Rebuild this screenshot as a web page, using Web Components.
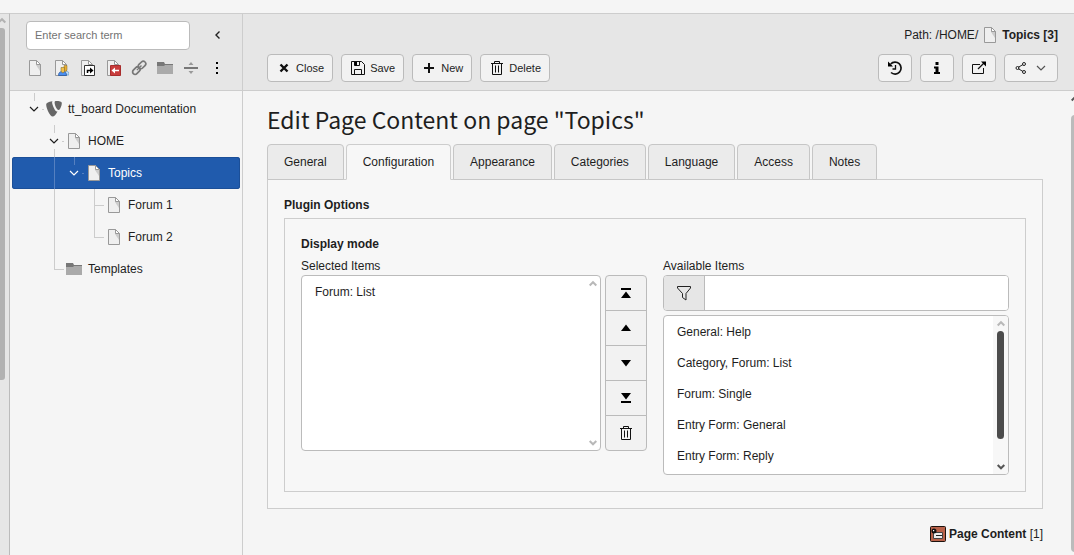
<!DOCTYPE html>
<html lang="en">
<head>
<meta charset="utf-8">
<title>Edit Page Content on page "Topics"</title>
<style>
  html, body { margin: 0; height: 100%; }
  body {
    font: 12px/16px "Liberation Sans", Arial, sans-serif;
    color: #1e1e1e;
    background: #f5f5f5;
    --line: #cdcdcd;
    --edge: #bbb;
    --bar: #e6e6e6;
  }
</style>
</head>
<body>
<app-shell>
  <module-scroll slot="modules"></module-scroll>
  <page-tree slot="tree"></page-tree>
  <doc-header slot="main"></doc-header>
  <edit-form slot="main"></edit-form>
</app-shell>

<script>
const ICONS = {
  page: '<path d="M2.5.5h7l4 4v11h-11z" fill="#efefef"/><path d="M9 1v4l4 6V5z" fill="#ccc"/><path d="M2.5.5h7l4 4v11h-11z" fill="none" stroke="#999"/><path d="M9.5.5v4h4z" fill="#fff" stroke="#999"/>',
  pageUsers: '<path d="M2.5.5h7l4 4v11h-11z" fill="#efefef" stroke="#999"/><path d="M9.5.5v4h4z" fill="#fff" stroke="#999"/><path d="M10 15c0-3 1-4 3-4s3 1 3 4z" fill="#b9d8f5" stroke="#5c94c4" stroke-width=".6"/><path d="M11 5.500h3v4l-1 2-2-1z" fill="#e8ae35" stroke="#8a6a1d" stroke-width=".5"/><path d="M5.500 15.500c0-3 1.500-4 4-4s4 1 4 4z" fill="#4b8ff0" stroke="#1f4f96" stroke-width=".7"/><path d="M8 7.500h3.500v4l-1.500 1.500-2-1.500z" fill="#f0c050" stroke="#77601e" stroke-width=".5"/>',
  pageLink: '<path d="M2.5.5h7l4 4v11h-11z" fill="#efefef" stroke="#999"/><path d="M9.5.5v4h4z" fill="#fff" stroke="#999"/><path d="M5.500 5.500h10v10h-10z" fill="#fff" stroke="#333"/><path d="M8.500 13v-2.500h3" fill="none" stroke="#000" stroke-width="1.500"/><path d="M11 7.500l3.500 3-3.500 3z"/>',
  pageMount: '<path d="M2.5.5h7l4 4v11h-11z" fill="#efefef" stroke="#999"/><path d="M9.5.5v4h4z" fill="#fff" stroke="#999"/><path d="M5.500 5.500h10v10h-10z" fill="#c83c3c" stroke="#a82c2c"/><path d="M14 10.500H9" stroke="#fff" stroke-width="1.500"/><path d="M10 7.500l-3.500 3 3.500 3z" fill="#fff"/>',
  link: '<g fill="none" stroke="#777" stroke-width="1.700" transform="rotate(-45 8 8)"><rect x="0" y="5.500" width="8.500" height="5" rx="2.500"/><rect x="8" y="5.500" width="8.500" height="5" rx="2.500"/><path d="M5 8h6.500" stroke-width="1.400"/></g>',
  folder: '<path d="M0 4h16v10H0z" fill="#aaa"/><path d="M0 2h7l1 2h8v1H8L7 6H0z" fill="#777"/>',
  divider: '<path d="M1 7h14v2H1z" fill="#777"/><path d="M5.500 5h5L8 2zM5.500 11h5L8 14z" fill="#999"/>',
  dots: '<path d="M7 2h2v2H7zM7 7h2v2H7zM7 12h2v2H7z"/>',
  typo3: '<path d="M11.500 10.400c-.2.100-.4.100-.6.100-1.900 0-4.800-6.800-4.800-9 0-.8.200-1.100.5-1.300C4.200.5 1.400 1.300.5 2.400.3 2.700.2 3.100.2 3.700.2 7.200 4 15.500 6.700 15.500c1.300 0 3.400-2.100 4.800-5.100M10.500 0c2.500 0 5.300.4 5.300 2 0 3.100-2 7.100-3.200 7.100-1.900 0-4-5.100-4-7.600C8.600.3 9.100 0 10.500 0" fill="#666"/>',
  left: '<path d="M9.500 4.500L6 8l3.500 3.500" fill="none" stroke="#222" stroke-width="1.400"/>',
  down: '<path d="M4 6l4 4 4-4" fill="none" stroke="currentColor" stroke-width="1.200"/>',
  close: '<path d="M4.500 4.500l7 7M11.500 4.500l-7 7" stroke="#111" stroke-width="2.400"/>',
  save: '<path d="M1.500 1.500h10l3 3v10h-13z" fill="none" stroke="#111"/><path d="M4.500 2v3.500h5V2M4.500 14V9.500h7V14" fill="none" stroke="#111"/><path d="M4.500 2h2.500v3.500H4.500z"/>',
  plus: '<path d="M8 3v10M3 8h10" stroke="#111" stroke-width="2"/>',
  trash: '<path d="M2 3.500h12M5.500 3V1.500h5V3M3.500 4v10.500h9V4M6.500 5.500v7M9.500 5.500v7" fill="none" stroke="#111"/>',
  history: '<path d="M3.700 4A6 6 0 1 1 4 12.500" fill="none" stroke="#111" stroke-width="1.700"/><path d="M1 1.500v5h5z"/><path d="M8.500 5v4H5.500" fill="none" stroke="#111" stroke-width="1.300"/>',
  info: '<path d="M6.500 2h3v3h-3zM5 6.500h4.500v5.500H11v2H5v-2h1.500V8.500H5z"/>',
  external: '<path d="M9 4.500H1.500v9h11V8" fill="none" stroke="#111"/><path d="M7 9l6-6" stroke="#111" stroke-width="1.300"/><path d="M10 1.500h5v5z"/>',
  share: '<path d="M5 7.500l5-3M5 8.500l5 3" stroke="#222"/><g fill="none" stroke="#222"><circle cx="4.500" cy="8" r="1.500"/><circle cx="11" cy="4" r="1.500"/><circle cx="11" cy="12" r="1.500"/></g>',
  top: '<path d="M3 3h10v2H3zM3 13h10L8 6.500z"/>',
  up: '<path d="M3 11h10L8 4.500z"/>',
  lower: '<path d="M3 5h10l-5 6.500z"/>',
  bottom: '<path d="M3 11h10v2H3zM3 3h10L8 9.500z"/>',
  filter: '<path d="M1.500 1.500h13v1.500l-4.500 5.500v6.500l-3.500-2.500V8.500L1.500 3z" fill="none" stroke="#222"/>',
  content: '<rect x=".5" y=".5" width="15" height="15" rx="1" fill="#b9624a" stroke="#1c120e"/><path d="M3.500 6.500h9v6h-9z" fill="#eee" stroke="#444"/><path d="M6 9.500h6" stroke="#222"/><circle cx="4" cy="5" r="2.500" fill="#111"/><path d="M3 4h1.200v1.200H3z" fill="#fff"/>',
  caretUp: '<path d="M4.700 9.500L8 6.200l3.300 3.300" fill="none" stroke="currentColor" stroke-width="2"/>',
  caretDown: '<path d="M4.700 6L8 9.300 11.300 6" fill="none" stroke="currentColor" stroke-width="2"/>'
};

const BASE = `
  *, *::before, *::after { box-sizing: border-box; }
  :host { box-sizing: border-box; }
  button, input, select { font: inherit; color: inherit; margin: 0; outline-offset: 1px; }
  button { cursor: pointer; }
`;

class Base extends HTMLElement {
  constructor() {
    super();
    this.attachShadow({ mode: 'open' });
  }
  connectedCallback() {
    this.shadowRoot.innerHTML = `<style>${BASE}${this.styles()}</style>${this.markup()}`;
  }
  styles() { return ''; }
  markup() { return '<slot></slot>'; }
}

customElements.define('ui-icon', class extends Base {
  styles() { return ':host{display:block;flex:none;width:16px;height:16px} svg{display:block}'; }
  markup() { return `<svg width="16" height="16" viewBox="0 0 16 16" aria-hidden="true">${ICONS[this.getAttribute('name')]}</svg>`; }
});

customElements.define('app-shell', class extends Base {
  styles() { return `
    :host { display: grid; height: 100vh; grid-template: 13px minmax(0, 1fr) / 10px 233px minmax(0, 1fr); }
    .top { grid-column: 1 / -1; background: #f5f5f5; }
    .modules, .tree, .main { border-top: 1px solid var(--line); overflow: hidden; min-width: 0; }
    .modules { background: var(--bar); border-right: 1px solid var(--edge); }
    .tree { border-right: 1px solid var(--line); }
    .main { display: flex; flex-direction: column; }
  `; }
  markup() { return `
    <div class="top"></div>
    <div class="modules"><slot name="modules"></slot></div>
    <nav class="tree"><slot name="tree"></slot></nav>
    <main class="main"><slot name="main"></slot></main>
  `; }
});

customElements.define('module-scroll', class extends Base {
  styles() { return `
    :host { display: flex; flex-direction: column; height: 100%; color: #b2b2b2; overflow: hidden; }
    .arrow { display: flex; align-items: center; height: 14px; margin-left: -6px; }
    .thumb { width: 5px; flex: 0 0 65%; background: #b2b2b2; border-radius: 0 3px 3px 0; }
  `; }
  markup() { return '<div class="arrow"><ui-icon name="caretUp"></ui-icon></div><div class="thumb"></div>'; }
});

customElements.define('tree-node', class extends Base {
  styles() { return `
    :host { display: flex; align-items: center; height: 32px; padding-left: 12px; border-radius: 3px; --guide: #ccc; }
    :host([selected]) { background: #205bad; color: #fff; box-shadow: inset 0 0 0 1px #1b4f98; --guide: #5580c0; }
    i { position: relative; width: 20px; height: 32px; flex: none; }
    i::before, i::after { content: ""; position: absolute; background: var(--guide); display: none; }
    i::before { left: 10px; width: 1px; top: 0; height: 32px; }
    i::after { left: 10px; width: 10px; top: 16px; height: 1px; }
    .v::before, .tee::before, .elbow::before, .toggle::before,
    .tee::after, .elbow::after, .toggle::after { display: block; }
    .elbow::before { height: 16px; }
    .toggle::before { height: 8px; }
    .toggle::after { left: 18px; width: 2px; }
    .open::before { height: 32px; background: linear-gradient(var(--guide) 8px, transparent 8px 24px, var(--guide) 24px); }
    .toggle ui-icon { margin: 8px 2px; }
    .icon { margin: 0 6px 0 2px; }
    a { color: inherit; text-decoration: none; white-space: nowrap; }
  `; }
  markup() {
    const cells = this.getAttribute('guides').split(',').map(g =>
      `<i class="${g}">${g.includes('toggle') ? '<ui-icon name="down"></ui-icon>' : ''}</i>`).join('');
    return `${cells}<ui-icon class="icon" name="${this.getAttribute('icon')}"></ui-icon><a href="#"><slot></slot></a>`;
  }
});

customElements.define('page-tree', class extends Base {
  styles() { return `
    :host { display: block; }
    header { height: 77px; background: var(--bar); border-bottom: 1px solid var(--line); padding: 7px 11px 0 16px; }
    .search { display: flex; align-items: center; gap: 15px; }
    input { flex: 1; min-width: 0; height: 29px; padding: 0 8px 2px; font-size: 11px; border: 1px solid var(--edge); border-radius: 4px; background: #fff; }
    input::placeholder { color: #737373; opacity: 1; }
    button { border: 0; background: none; padding: 5px; }
    .search button { padding: 4px 5px 6px; }
    .tools { display: flex; margin: 5px -4px 0; }
    .tree { padding: 2px; }
  `; }
  markup() {
    const tools = [['page', 'New page'], ['pageUsers', 'Backend user section'], ['pageLink', 'Shortcut'], ['pageMount', 'Mount point'],
      ['link', 'External link'], ['folder', 'Folder'], ['divider', 'Menu separator'], ['dots', 'More options']];
    return `
    <header>
      <div class="search">
        <input type="search" placeholder="Enter search term" aria-label="Enter search term">
        <button aria-label="Collapse page tree"><ui-icon name="left"></ui-icon></button>
      </div>
      <div class="tools">${tools.map(([n, l]) => `<button aria-label="${l}"><ui-icon name="${n}"></ui-icon></button>`).join('')}</div>
    </header>
    <div class="tree">
      <tree-node guides="toggle" icon="typo3">tt_board Documentation</tree-node>
      <tree-node guides="none,toggle open" icon="page">HOME</tree-node>
      <tree-node guides="none,v,toggle" icon="page" selected>Topics</tree-node>
      <tree-node guides="none,v,none,tee" icon="page">Forum 1</tree-node>
      <tree-node guides="none,v,none,elbow" icon="page">Forum 2</tree-node>
      <tree-node guides="none,elbow" icon="folder">Templates</tree-node>
    </div>`;
  }
});

customElements.define('tool-button', class extends Base {
  styles() { return `
    :host { display: block; }
    button { display: flex; align-items: center; gap: 4px; height: 28px; padding: 0 8px; font-size: 11px; border: 1px solid var(--edge); border-radius: 4px; background: #f2f2f2; white-space: nowrap; }
    :host([split]) ui-icon + ui-icon { color: #555; }
  `; }
  markup() {
    const label = this.getAttribute('label');
    return `<button ${label ? `aria-label="${label}"` : ''}>
      <ui-icon name="${this.getAttribute('icon')}"></ui-icon>${this.hasAttribute('split') ? '<ui-icon name="down"></ui-icon>' : ''}<slot></slot></button>`;
  }
});

customElements.define('doc-header', class extends Base {
  styles() { return `
    :host { display: block; flex: none; background: var(--bar); border-bottom: 1px solid var(--line); padding: 13px 16px 8px 24px; }
    .path { display: flex; justify-content: flex-end; align-items: center; gap: 4px; height: 16px; margin-bottom: 11px; }
    .bar, .group { display: flex; gap: 8px; }
    .bar { justify-content: space-between; }
  `; }
  markup() { return `
    <div class="path"><span>Path: /HOME/</span><ui-icon name="page"></ui-icon><strong>Topics [3]</strong></div>
    <div class="bar">
      <div class="group">
        <tool-button icon="close">Close</tool-button>
        <tool-button icon="save">Save</tool-button>
        <tool-button icon="plus">New</tool-button>
        <tool-button icon="trash">Delete</tool-button>
      </div>
      <div class="group">
        <tool-button icon="history" label="History"></tool-button>
        <tool-button icon="info" label="Information"></tool-button>
        <tool-button icon="external" label="Open in new window"></tool-button>
        <tool-button icon="share" label="Share" split></tool-button>
      </div>
    </div>`; }
});

customElements.define('tab-strip', class extends Base {
  styles() { return `
    :host { display: flex; gap: 2px; margin-bottom: -1px; }
    button { height: 36px; padding: 0 16px; border: 1px solid #c6c6c6; border-radius: 4px 4px 0 0; background: #ebebeb; }
    button[aria-selected="true"] { background: #f7f7f7; border-color: var(--line) var(--line) #f7f7f7; z-index: 1; }
  `; }
  markup() {
    return this.getAttribute('tabs').split(',').map(t =>
      `<button role="tab" aria-selected="${t === this.getAttribute('active')}">${t}</button>`).join('');
  }
});

customElements.define('scroll-rail', class extends Base {
  styles() { return `
    :host { position: absolute; inset: 1px 1px 1px auto; width: 15px; display: flex; flex-direction: column; align-items: center; justify-content: space-between; border-radius: 0 3px 3px 0; color: #b8b8b8; pointer-events: none; }
    :host([active]) { background: #f7f7f7; }
    .thumb { width: 7px; flex: 0 0 108px; margin-bottom: auto; border-radius: 4px; background: #4b4b4b; }
    :host([active]) ui-icon:last-child { color: #555; }
    ui-icon { height: 15px; }
  `; }
  markup() { return `<ui-icon name="caretUp"></ui-icon>${this.hasAttribute('active') ? '<div class="thumb"></div>' : ''}<ui-icon name="caretDown"></ui-icon>`; }
});

customElements.define('item-picker', class extends Base {
  styles() { return `
    :host { display: grid; grid-template-columns: 1fr 1fr; gap: 16px; }
    label { display: block; height: 17px; }
    .row { display: flex; gap: 4px; }
    .box { position: relative; flex: 1; min-width: 0; }
    select { display: block; width: 100%; height: 176px; padding: 0; border: 1px solid var(--edge); border-radius: 4px; background: #fff; overflow-y: auto; scrollbar-width: none; }
    .available select { height: 160px; }
    option { display: block; min-height: 31px; padding: 9px 13px 6px; line-height: 16px; }
    .moves { display: flex; flex-direction: column; width: 42px; }
    .moves button { display: grid; place-items: center; height: 36px; padding: 0; border: 1px solid var(--edge); background: #f2f2f2; }
    .moves button + button { margin-top: -1px; }
    .moves button:first-child { border-radius: 4px 4px 0 0; }
    .moves button:last-child { border-radius: 0 0 4px 4px; }
    .filter { display: flex; height: 36px; margin-bottom: 4px; border: 1px solid var(--edge); border-radius: 4px; overflow: hidden; background: #fff; }
    .filter span { display: grid; place-items: center; width: 41px; background: var(--bar); border-right: 1px solid var(--edge); }
    .filter input { flex: 1; min-width: 0; border: 0; padding: 0 12px; background: #fff; }
  `; }
  markup() { return `
    <div>
      <label for="selected">Selected Items</label>
      <div class="row">
        <div class="box"><select id="selected" multiple><option>Forum: List</option></select><scroll-rail></scroll-rail></div>
        <div class="moves">
          <button aria-label="Move to top"><ui-icon name="top"></ui-icon></button>
          <button aria-label="Move up"><ui-icon name="up"></ui-icon></button>
          <button aria-label="Move down"><ui-icon name="lower"></ui-icon></button>
          <button aria-label="Move to bottom"><ui-icon name="bottom"></ui-icon></button>
          <button aria-label="Remove"><ui-icon name="trash"></ui-icon></button>
        </div>
      </div>
    </div>
    <div class="available">
      <label for="available">Available Items</label>
      <div class="filter"><span><ui-icon name="filter"></ui-icon></span><input type="text" aria-label="Filter items"></div>
      <div class="box"><select id="available" multiple>
        <option>General: Help</option><option>Category, Forum: List</option><option>Forum: Single</option><option>Entry Form: General</option><option>Entry Form: Reply</option>
      </select><scroll-rail active></scroll-rail></div>
    </div>`; }
});

customElements.define('edit-form', class extends Base {
  styles() { return `
    :host { display: flex; flex: 1; min-height: 0; }
    .content { flex: 1; min-width: 0; padding: 10px 28px 0 24px; overflow: hidden; }
    h1 { margin: 0 0 7px; font: 400 23px/36px "Noto Sans CJK SC", sans-serif; }
    h2, h3 { margin: 0; font-size: 12px; line-height: 16px; }
    .panel { border: 1px solid var(--line); background: #f7f7f7; padding: 17px 16px 16px; }
    .panel h2 { margin-bottom: 5px; }
    .section { border: 1px solid var(--line); padding: 17px 16px 16px; }
    .section h3 { margin-bottom: 6px; }
    footer { display: flex; justify-content: flex-end; align-items: center; gap: 3px; margin-top: 17px; }
    .rail { flex: 0 0 3px; overflow: hidden; color: #555; }
    .rail ui-icon { margin-left: -4px; }
    .thumb { margin-top: 8px; height: calc(100% - 27px); width: 8px; border-radius: 4px; background: #bbb; }
  `; }
  markup() { return `
    <div class="content">
      <h1>Edit Page Content on page "Topics"</h1>
      <tab-strip role="tablist" tabs="General,Configuration,Appearance,Categories,Language,Access,Notes" active="Configuration"></tab-strip>
      <div class="panel" role="tabpanel">
        <h2>Plugin Options</h2>
        <div class="section"><h3>Display mode</h3><item-picker></item-picker></div>
      </div>
      <footer><ui-icon name="content"></ui-icon><span><strong>Page Content</strong> [1]</span></footer>
    </div>
    <div class="rail"><ui-icon name="caretUp"></ui-icon><div class="thumb"></div></div>`; }
});
</script>
</body>
</html>
